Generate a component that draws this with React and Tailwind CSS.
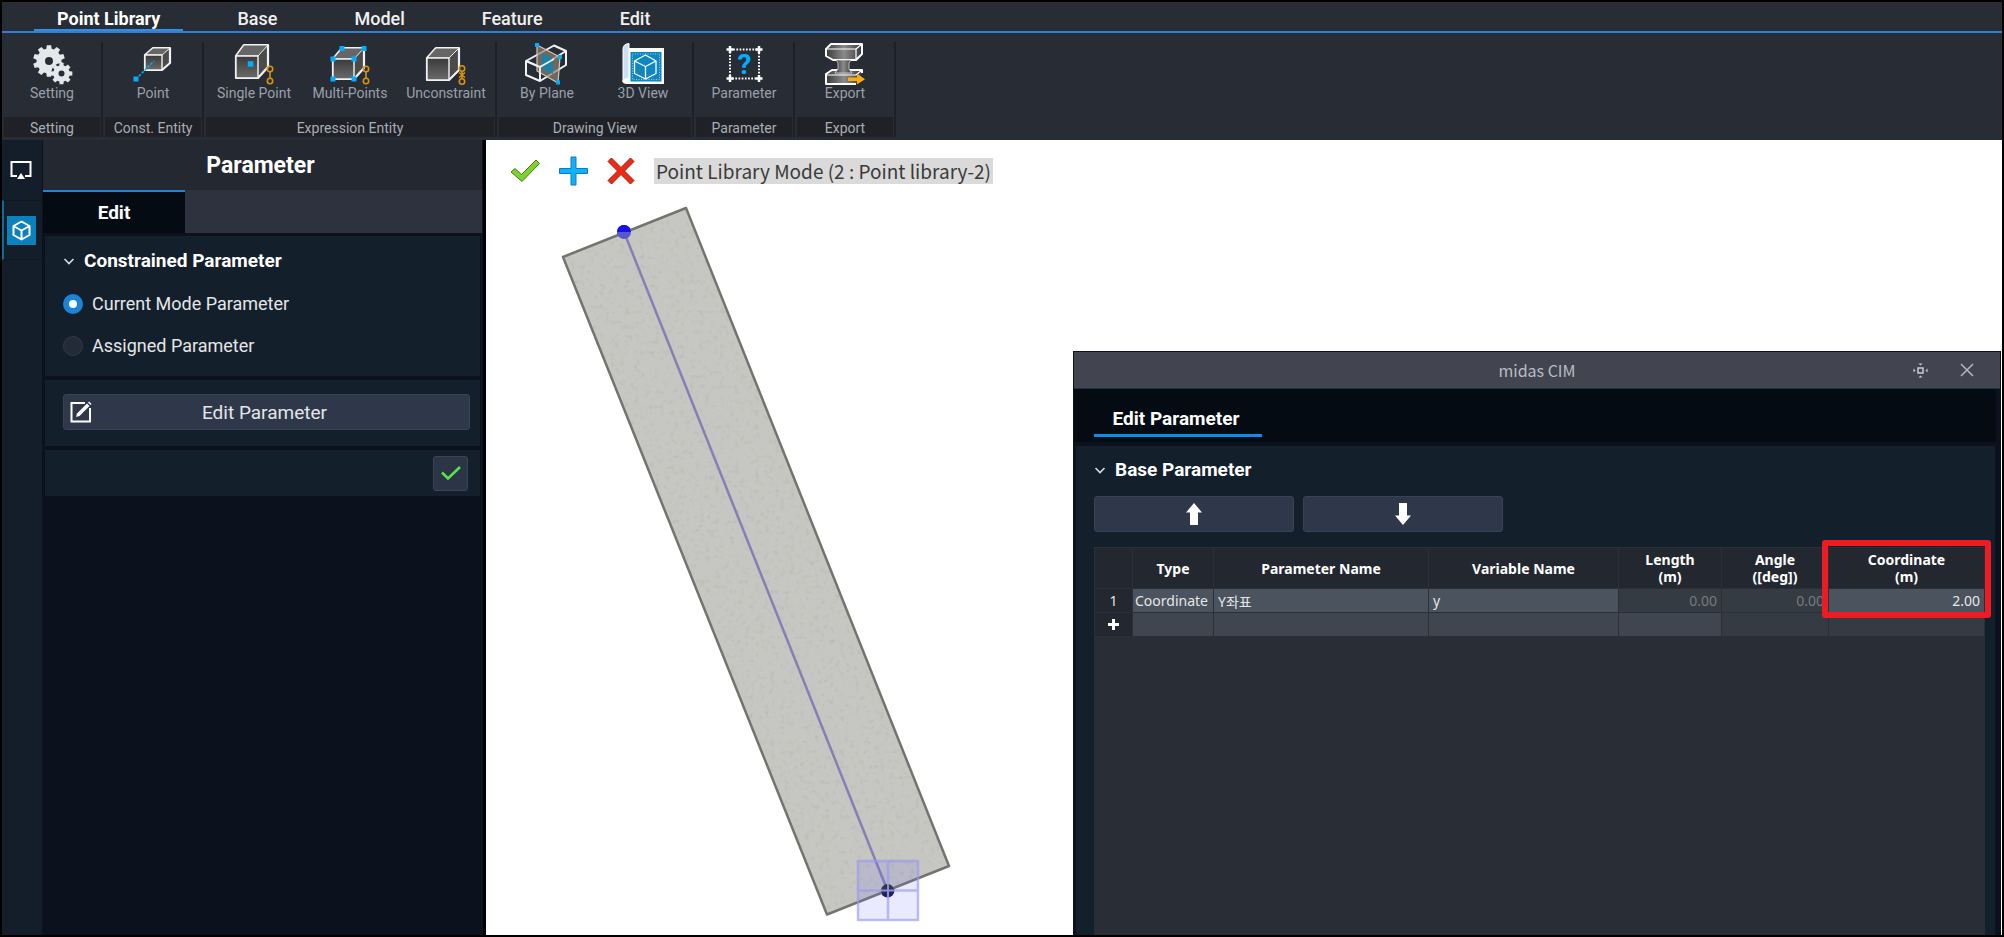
import { useState } from "react";

const tabs = ["Point Library", "Base", "Model", "Feature", "Edit"];

const gearPath = (cx, cy, outer, inner, teeth) => {
  const pts = [];
  const step = (Math.PI * 2) / teeth;
  for (let i = 0; i < teeth; i++) {
    const a = i * step - Math.PI / 2;
    [
      [-0.34, inner],
      [-0.22, outer],
      [0.22, outer],
      [0.34, inner],
    ].forEach(([o, r]) => {
      pts.push(
        `${(cx + r * Math.cos(a + o * step)).toFixed(2)},${(cy + r * Math.sin(a + o * step)).toFixed(2)}`
      );
    });
  }
  return `M${pts.join("L")}Z`;
};

const Icon = ({ children }) => (
  <svg
    width="40"
    height="43"
    viewBox="0 0 40 43"
    fill="none"
    className="overflow-visible"
    aria-hidden="true"
  >
    <defs>
      <linearGradient id="face" x1="0" y1="0" x2="0" y2="1">
        <stop offset="0" stopColor="#3a3a3a" />
        <stop offset="1" stopColor="#6a6a6a" />
      </linearGradient>
      <linearGradient id="metal" x1="0" y1="0" x2="1" y2="0">
        <stop offset="0" stopColor="#3a3a3a" />
        <stop offset="0.5" stopColor="#8a8a8a" />
        <stop offset="1" stopColor="#3a3a3a" />
      </linearGradient>
    </defs>
    {children}
  </svg>
);

// x1,y1,x2,y2: front face, tx,ty: back top left corner, rx: back right edge
const Cube = ({ x1, y1, x2, y2, tx, ty, rx }) => {
  const by = y2 - (y1 - ty);
  return (
    <g stroke="#f2f2f2" strokeLinejoin="round">
      <path
        d={`M${x1} ${y1}L${tx} ${ty}H${rx}V${by}L${x2} ${y2}H${x1}Z`}
        fill="#4b4b4b"
        strokeWidth="2.2"
      />
      <path d={`M${x1} ${y1}L${tx} ${ty}H${rx}L${x2} ${y1}Z`} fill="#666" />
      <path d={`M${x1} ${y1}H${x2}V${y2}H${x1}Z`} fill="url(#face)" strokeWidth="1.4" />
    </g>
  );
};

const Dots = ({ points, size = 5 }) =>
  points.map(([x, y]) => (
    <rect
      key={`${x}-${y}`}
      x={x - size / 2}
      y={y - size / 2}
      width={size}
      height={size}
      fill="#00aeff"
    />
  ));

const Link = () => (
  <g stroke="#d9930d" strokeWidth="1.6">
    <circle cx="36" cy="27" r="2.7" />
    <circle cx="36" cy="39" r="2.7" />
    <path d="M36 30v6" />
  </g>
);

const icons = {
  setting: (
    <>
      <path
        fillRule="evenodd"
        fill="#e3e9ea"
        d={`${gearPath(17, 19, 16, 12.5, 10)}M21 19a4 4 0 1 0-8 0a4 4 0 1 0 8 0Z`}
      />
      <circle cx="29.5" cy="31.5" r="10.5" fill="#282c35" />
      <path
        fillRule="evenodd"
        fill="#e3e9ea"
        d={`${gearPath(29.5, 31.5, 11, 8.3, 8)}M32.5 31.5a3 3 0 1 0-6 0a3 3 0 1 0 6 0Z`}
      />
    </>
  ),
  point: (
    <>
      <Cube x1={12} y1={13} x2={29} y2={28} tx={20} ty={6} rx={37} />
      <path d="M3 37L21 19" stroke="#00aeff" strokeWidth="1.6" strokeDasharray="2.5 1.6" />
      <Dots points={[[3, 37]]} />
    </>
  ),
  single: (
    <>
      <Cube x1={2} y1={14} x2={24} y2={36} tx={10} ty={3} rx={34} />
      <Dots points={[[16.5, 22]]} size={5.5} />
      <Link />
    </>
  ),
  multi: (
    <>
      <Cube x1={3} y1={17} x2={24} y2={37} tx={12} ty={6} rx={34} />
      <Dots points={[[3, 17], [24, 17], [3, 37], [24, 37], [12, 6.5], [34, 6.5]]} />
      <Link />
    </>
  ),
  unconstraint: (
    <>
      <Cube x1={1} y1={16} x2={23} y2={38} tx={10} ty={6} rx={33} />
      <g stroke="#d9930d" strokeWidth="1.6">
        <circle cx="36" cy="26.5" r="2.7" />
        <circle cx="36" cy="39.5" r="2.7" />
        <path d="M36 29v8M33 30.5l6 5M39 30.5l-6 5" />
      </g>
    </>
  ),
  plane: (
    <>
      <g stroke="#f2f2f2" strokeWidth="2" strokeLinejoin="round">
        <path d="M-1 19L27 3.500L39 9V23L13 39L-1 33Z" />
        <path d="M-1 19L13 25V39M13 25L39 9" />
      </g>
      <path
        d="M10 3L33 15L31 41L10 29Z"
        fill="#8f8170"
        fillOpacity="0.7"
        stroke="#cfc8c0"
        strokeWidth="1.2"
      />
      <path d="M15 11L26 17V32L15 27Z" fill="#1e7fa8" />
      <path d="M-1 19L13 25V39M13 25L27 17" stroke="#f2f2f2" strokeWidth="1.6" />
      <Dots points={[[10, 3], [33, 15], [31, 40.5]]} size={4} />
    </>
  ),
  view3d: (
    <>
      <path d="M3 6H41V42H3Z" fill="#fff" />
      <path d="M0 7Q0 2 6 1.500V37Q0 37 0 40Z" fill="#cfdff2" stroke="#fff" strokeWidth="1" />
      <path d="M6 36Q-1 36 -0.500 39.500Q0 42 4 42H8V36Z" fill="#fff" />
      <rect x="7.500" y="10" width="31" height="29.500" fill="#0f86bf" />
      <rect
        x="9.500"
        y="12"
        width="27"
        height="25.500"
        stroke="#8fd0f0"
        strokeDasharray="1 1.500"
      />
      <path
        d="M22.500 13L33 19V31.500L22.500 37L11.500 31.500V19ZM11.500 19L22.500 24.500L33 19M22.500 24.500V37"
        stroke="#fff"
        strokeWidth="1.3"
        strokeLinejoin="round"
      />
    </>
  ),
  parameter: (
    <>
      <rect x="6" y="7.500" width="29" height="29" stroke="#fff" strokeWidth="2" strokeDasharray="1.700 1.500" />
      <path
        d="M2.500 7.500h7M6 4v7M31.500 7.500h7M35 4v7M2.500 36.500h7M6 33v7M31.500 36.500h7M35 33v7"
        stroke="#fff"
        strokeWidth="2.500"
      />
      <text
        x="20.500"
        y="32"
        textAnchor="middle"
        fill="#00aeff"
        className="font-[Roboto] text-[28px] font-bold"
      >
        ?
      </text>
    </>
  ),
  export: (
    <>
      <g stroke="#fff" strokeWidth="2" strokeLinejoin="round">
        <path d="M1 7L6 2H37V12L31 18H8L1 14Z" fill="url(#metal)" />
        <path d="M1 7H31L37 2M31 7V18" strokeWidth="1.200" />
        <path d="M37 31V28H7L1 32V42H31" fill="url(#metal)" />
        <path d="M1 33H31L37 28" strokeWidth="1.200" />
      </g>
      <path d="M11 18H26L24 21V27L27 31H10L13 27V21Z" fill="url(#metal)" stroke="#ddd" strokeWidth="0.800" />
      <path d="M23 35.500H32V31.500L40 37.200L32 42.500V39H23Z" fill="#ffa90a" />
    </>
  ),
};

const groups = [
  { name: "Setting", items: [["Setting", "setting"]] },
  { name: "Const. Entity", items: [["Point", "point"]] },
  {
    name: "Expression Entity",
    items: [
      ["Single Point", "single"],
      ["Multi-Points", "multi"],
      ["Unconstraint", "unconstraint"],
    ],
  },
  {
    name: "Drawing View",
    items: [
      ["By Plane", "plane"],
      ["3D View", "view3d"],
    ],
  },
  { name: "Parameter", items: [["Parameter", "parameter"]] },
  { name: "Export", items: [["Export", "export"]] },
];

const Ribbon = () => {
  const [active, setActive] = useState("Point Library");
  return (
    <header className="bg-[#282c35] font-[Roboto,sans-serif]">
      <nav className="flex h-[31px] gap-[31px] border-b-2 border-[#2f7fd6] pl-8">
        {tabs.map((tab) => (
          <button
            key={tab}
            type="button"
            onClick={() => setActive(tab)}
            className={
              tab === active
                ? "border-b-2 border-[#2f8fe8] px-[23px] pt-[6px] text-lg leading-5 font-bold text-white"
                : "border-b-2 border-transparent px-[23px] pt-[6px] text-lg leading-5 font-medium text-[#f0f0f0]"
            }
          >
            {tab}
          </button>
        ))}
      </nav>
      <div className="flex h-[107px] pt-[9px] pb-[3px]">
        {groups.map((group) => (
          <div key={group.name} className="flex border-r-2 border-[#1d2027] pr-px pl-0.5">
            <div className="flex flex-col justify-between">
              <div className="flex">
                {group.items.map(([label, icon]) => (
                  <button
                    key={label}
                    type="button"
                    className="flex w-24 flex-col items-center text-[#9ba0aa]"
                  >
                    <Icon>{icons[icon]}</Icon>
                    <span className="text-sm leading-4 whitespace-nowrap">{label}</span>
                  </button>
                ))}
              </div>
              <div className="h-5 bg-[#1f2127] text-center text-sm leading-[22px] text-[#a9adb5]">
                {group.name}
              </div>
            </div>
          </div>
        ))}
      </div>
    </header>
  );
};

const Chevron = () => (
  <svg width="12" height="12" viewBox="0 0 12 12" fill="none" aria-hidden="true">
    <path d="M1.500 4L6 8.500L10.500 4" stroke="#d8dce0" strokeWidth="1.600" />
  </svg>
);

const SideRail = () => (
  <div className="flex w-10 shrink-0 flex-col bg-[#141e2a]">
    <button
      type="button"
      aria-label="Display"
      className="flex h-[60px] items-center justify-center pr-0.5"
    >
      <svg width="22" height="20" viewBox="0 0 22 20" fill="none" aria-hidden="true">
        <path d="M7 16H1.500V2H20.500V16H15" stroke="#fff" strokeWidth="2" />
        <path d="M11 13L15 19H7Z" fill="#fff" />
      </svg>
    </button>
    <button
      type="button"
      aria-label="Model"
      className="flex h-[60px] items-center justify-center border-y border-l-2 border-y-[#0f1720] border-l-[#0f6c94] pr-1"
    >
      <span className="flex size-[29px] items-center justify-center bg-[#0c82bd]">
        <svg width="21" height="21" viewBox="0 0 21 21" fill="none" aria-hidden="true">
          <path
            d="M10.500 1.500L18.500 6V15L10.500 19.500L2.500 15V6ZM2.500 6L10.500 10.500L18.500 6M10.500 10.500V19.500"
            stroke="#fff"
            strokeWidth="2"
            strokeLinejoin="round"
          />
        </svg>
      </span>
    </button>
  </div>
);

const ParameterPanel = () => {
  const [mode, setMode] = useState("current");
  const radio =
    "size-5 appearance-none rounded-full border border-[#323a49] bg-[#242b38] checked:border-[6px] checked:border-[#1b84d9] checked:bg-white";
  return (
    <aside className="flex w-[444px] shrink-0 flex-col border-r-[3px] border-black bg-[#0c121d] px-px font-[Roboto,sans-serif] text-[#e4e6e8]">
      <h1 className="h-[50px] bg-[#242831] pr-1 text-center text-[23px] leading-[52px] font-bold text-white">
        Parameter
      </h1>
      <div className="flex h-[43px] bg-[#2d323e]">
        <button
          type="button"
          className="w-[142px] border-t-2 border-[#1787dd] bg-[#050b12] pt-0.5 text-[19px] font-bold text-white"
        >
          Edit
        </button>
      </div>
      <div className="flex flex-col gap-1 px-0.5 pt-[3px]">
        <section className="h-[140px] bg-[#141f2c] px-[18px] pt-[13px]">
          <h2 className="flex items-center gap-[9px] text-[19px] leading-6 font-bold text-white">
            <Chevron />
            Constrained Parameter
          </h2>
          <label className="mt-[19px] flex items-center gap-[9px] text-lg leading-6">
            <input
              type="radio"
              name="mode"
              className={radio}
              checked={mode === "current"}
              onChange={() => setMode("current")}
            />
            Current Mode Parameter
          </label>
          <label className="mt-[18px] flex items-center gap-[9px] text-lg leading-6">
            <input
              type="radio"
              name="mode"
              className={radio}
              checked={mode === "assigned"}
              onChange={() => setMode("assigned")}
            />
            Assigned Parameter
          </label>
        </section>
        <section className="h-[66px] bg-[#141f2c] pt-[14px] pr-[10px] pl-[18px]">
          <button
            type="button"
            className="relative h-9 w-full rounded-[3px] border border-[#384356] bg-[#2e384a] pt-0.5 pr-1 text-[19px] leading-6"
          >
            <svg
              className="absolute top-[6px] left-[6px]"
              width="22"
              height="22"
              viewBox="0 0 22 22"
              fill="none"
              aria-hidden="true"
            >
              <path d="M15 2H1.500V20.500H20V7" stroke="#fff" strokeWidth="2" />
              <path d="M6 16L7 12.500L17 2.500L19.500 5L9.500 15Z" fill="#fff" />
              <path d="M18 1.500L19 0.500L21.500 3L20.500 4Z" fill="#fff" />
            </svg>
            Edit Parameter
          </button>
        </section>
        <section className="flex h-[46px] items-center justify-end bg-[#141f2c] pr-3">
          <button
            type="button"
            aria-label="Apply"
            className="flex size-[35px] items-center justify-center rounded-[3px] border border-[#3a4456] bg-[#2b3546]"
          >
            <svg width="22" height="18" viewBox="0 0 22 18" fill="none" aria-hidden="true">
              <path d="M2 8.500L8 14.500L20 3" stroke="#5fe04a" strokeWidth="2.600" />
            </svg>
          </button>
        </section>
      </div>
    </aside>
  );
};

const Viewport = () => (
  <>
    <div className="flex h-[62px] items-center gap-[19px] pl-6">
      <button type="button" aria-label="OK">
        <svg width="30" height="26" viewBox="0 0 30 26" aria-hidden="true">
          <path
            d="M1 14L5 10.500L11.500 16.500L26 2L29.500 5.500L12 23.500Z"
            fill="#7ed32a"
            stroke="#4b7a22"
            strokeLinejoin="round"
          />
        </svg>
      </button>
      <button type="button" aria-label="Add">
        <svg width="29" height="30" viewBox="0 0 29 30" aria-hidden="true">
          <path
            d="M12 1H17V12.500H28.500V17.500H17V29H12V17.500H0.500V12.500H12Z"
            fill="#0db2ff"
            stroke="#1478b8"
            strokeLinejoin="round"
          />
        </svg>
      </button>
      <button type="button" aria-label="Cancel">
        <svg width="28" height="28" viewBox="0 0 28 28" aria-hidden="true">
          <path
            d="M1 4.500L4.500 1L14 10.500L23.500 1L27 4.500L17.500 14L27 23.500L23.500 27L14 17.500L4.500 27L1 23.500L10.500 14Z"
            fill="#ee2a12"
            stroke="#9c1d10"
            strokeLinejoin="round"
          />
        </svg>
      </button>
      <p className="bg-[#dadada] px-0.5 font-['Noto_Sans_CJK_KR',sans-serif] text-[19px] leading-[26px] text-[#3a3a3a]">
        Point Library Mode (2 : Point library-2)
      </p>
    </div>
    <svg
      width="400"
      height="733"
      viewBox="555 202 400 733"
      fill="none"
      className="ml-[69px] overflow-visible"
      role="img"
      aria-label="Inclined member"
    >
      <defs>
        <filter id="concrete" x="0" y="0" width="100%" height="100%">
          <feTurbulence type="fractalNoise" baseFrequency="0.2" numOctaves="3" seed="4" />
          <feColorMatrix values="0 0 0 0 0.4  0 0 0 0 0.38  0 0 0 0 0.34  1.1 0 0 0 -0.6" />
          <feComposite in2="SourceGraphic" operator="in" result="grain" />
          <feMerge>
            <feMergeNode in="SourceGraphic" />
            <feMergeNode in="grain" />
          </feMerge>
        </filter>
      </defs>
      <circle cx="624" cy="232" r="7" fill="#1212f0" />
      <circle cx="887.500" cy="890.500" r="7" fill="#1212d0" />
      <path d="M686 208L563 257L827 914.500L949 866Z" fill="#c4c4c0" fillOpacity="0.96" filter="url(#concrete)" />
      <path
        d="M686 208L563 257L827 914.500L949 866Z"
        stroke="#74746f"
        strokeWidth="2.500"
        strokeLinejoin="round"
      />
      <path d="M624 232L887.500 890.500" stroke="#8480b4" strokeWidth="2.500" />
      <path d="M617 232A7 7 0 0 1 631 232" fill="#1212f0" />
      <path d="M617 232A7 7 0 0 0 631 232" fill="#5a58c8" />
      <rect x="858" y="861" width="60" height="59" fill="#6a6aff" fillOpacity="0.14" />
      <path
        d="M858 861H918V920H858ZM888 861V920M858 890.500H918"
        stroke="#9a9af0"
        strokeOpacity="0.65"
        strokeWidth="2.500"
      />
      <circle cx="887.500" cy="890.500" r="6.500" fill="#22223c" fillOpacity="0.85" />
      <path d="M881 890.500H894M888 884V897" stroke="#8f8fd8" strokeWidth="2" />
    </svg>
  </>
);

const columns = [
  { label: "", width: "w-[38px]" },
  { label: "Type", width: "w-[81px]" },
  { label: "Parameter Name", width: "w-[215px]" },
  { label: "Variable Name", width: "w-[190px]" },
  { label: "Length", unit: "(m)", width: "w-[103px]" },
  { label: "Angle", unit: "([deg])", width: "w-[107px]" },
  { label: "Coordinate", unit: "(m)", width: "" },
];

const ParameterTable = () => {
  const [row, setRow] = useState({ name: "Y좌표", variable: "y", coordinate: "2.00" });

  const handleChange = (e) => {
    setRow({ ...row, [e.target.name]: e.target.value });
  };

  const cell = "h-6 border border-[#2a2f38] p-0";
  const input = "block h-[23px] w-full bg-transparent px-1 text-sm focus:outline-none";

  return (
    <div className="relative mt-[15px] flex-1 bg-[#282d36] font-['Noto_Sans','Noto_Sans_CJK_KR',sans-serif] text-sm text-[#e6e6e6]">
      <table className="w-full table-fixed border-collapse">
        <thead>
          <tr className="h-[41px] bg-[#232730] text-white">
            {columns.map((col) => (
              <th
                key={col.label}
                className={`${col.width} border border-[#2a2f38] p-0 leading-[17px] font-bold`}
              >
                {col.label}
                {col.unit && <span className="block">{col.unit}</span>}
              </th>
            ))}
          </tr>
        </thead>
        <tbody className="leading-[22px]">
          <tr>
            <td className={`${cell} bg-[#232730] text-center`}>1</td>
            <td className={`${cell} bg-[#4b535e] pl-0.5`}>Coordinate</td>
            <td className={`${cell} bg-[#4b535e]`}>
              <input
                aria-label="Parameter Name"
                name="name"
                value={row.name}
                onChange={handleChange}
                className={input}
              />
            </td>
            <td className={`${cell} bg-[#4b535e]`}>
              <input
                aria-label="Variable Name"
                name="variable"
                value={row.variable}
                onChange={handleChange}
                className={input}
              />
            </td>
            <td className={`${cell} bg-[#353b42] pr-1 text-right text-[#767a80]`}>0.00</td>
            <td className={`${cell} bg-[#353b42] pr-1 text-right text-[#767a80]`}>0.00</td>
            <td className={`${cell} bg-[#4b535e]`}>
              <input
                aria-label="Coordinate"
                name="coordinate"
                value={row.coordinate}
                onChange={handleChange}
                className={`${input} text-right`}
              />
            </td>
          </tr>
          <tr>
            <td className={`${cell} bg-[#232730]`}>
              <button type="button" aria-label="Add row" className="flex h-[22px] w-full items-center justify-center">
                <svg width="11" height="11" viewBox="0 0 11 11" aria-hidden="true">
                  <path d="M5.500 0V11M0 5.500H11" stroke="#fff" strokeWidth="3" />
                </svg>
              </button>
            </td>
            <td className={`${cell} bg-[#40464f]`} />
            <td className={`${cell} bg-[#40464f]`} />
            <td className={`${cell} bg-[#40464f]`} />
            <td className={`${cell} bg-[#40464f]`} />
            <td className={`${cell} bg-[#353b42]`} />
            <td className={`${cell} bg-[#353b42]`} />
          </tr>
        </tbody>
      </table>
      <div className="pointer-events-none absolute -top-[7px] -right-[6px] h-[78px] w-[169px] rounded-[3px] border-[6px] border-[#ed1c24]" />
    </div>
  );
};

const ParameterDialog = () => {
  const arrow =
    "flex h-9 w-[200px] items-center justify-center rounded-[3px] border border-[#384356] bg-[#2e384a]";
  return (
    <div
      role="dialog"
      aria-labelledby="dialog-title"
      className="absolute top-[211px] right-px bottom-0 flex w-[928px] flex-col border border-b-0 border-[#0c111b] bg-[#0c121d] font-[Roboto,sans-serif] text-white"
    >
      <div className="relative flex h-[37px] shrink-0 items-center justify-center border-b border-[#1d3340] bg-[#42454f]">
        <h2
          id="dialog-title"
          className="font-['Noto_Sans_CJK_KR',sans-serif] text-base text-[#b9bdc4]"
        >
          midas CIM
        </h2>
        <div className="absolute inset-y-0 right-[26px] flex items-center gap-8">
          <button type="button" aria-label="Dock">
            <svg width="15" height="15" viewBox="0 0 15 15" fill="none" aria-hidden="true">
              <rect x="5" y="5" width="5" height="5" stroke="#c8ccd2" strokeWidth="1.500" />
              <path
                d="M5.500 0.500H9.500L7.500 2.500ZM5.500 14.500H9.500L7.500 12.500ZM0.500 5.500V9.500L2.500 7.500ZM14.500 5.500V9.500L12.500 7.500Z"
                fill="#c8ccd2"
              />
            </svg>
          </button>
          <button type="button" aria-label="Close">
            <svg width="14" height="14" viewBox="0 0 14 14" aria-hidden="true">
              <path d="M1 1L13 13M13 1L1 13" stroke="#b4b8be" strokeWidth="1.500" />
            </svg>
          </button>
        </div>
      </div>
      <div className="mr-1 h-[53px] shrink-0 bg-[#050b12] pl-5">
        <button
          type="button"
          className="mt-3 h-9 w-[168px] border-b-[3px] border-[#0b8cf0] pt-1 pr-1 text-[19px] font-bold"
        >
          Edit Parameter
        </button>
      </div>
      <div className="mt-1 mr-[5px] ml-0.5 flex flex-1 flex-col bg-[#141f2c] pr-[10px] pl-[18px]">
        <h3 className="mt-3 flex items-center gap-[9px] text-[19px] leading-6 font-bold">
          <Chevron />
          Base Parameter
        </h3>
        <div className="mt-[14px] flex gap-[9px]">
          <button type="button" aria-label="Move up" className={arrow}>
            <svg width="16" height="22" viewBox="0 0 16 22" aria-hidden="true">
              <path d="M8 0L16 9.500H12V22H4V9.500H0Z" fill="#fff" />
            </svg>
          </button>
          <button type="button" aria-label="Move down" className={arrow}>
            <svg width="16" height="22" viewBox="0 0 16 22" aria-hidden="true">
              <path d="M8 22L16 12.500H12V0H4V12.500H0Z" fill="#fff" />
            </svg>
          </button>
        </div>
        <ParameterTable />
      </div>
    </div>
  );
};

export default function App() {
  return (
    <div className="flex h-screen flex-col overflow-hidden border-2 border-black bg-[#282c35]">
      <Ribbon />
      <div className="flex min-h-0 flex-1">
        <SideRail />
        <ParameterPanel />
        <main className="relative min-w-0 flex-1 overflow-hidden bg-white">
          <Viewport />
          <ParameterDialog />
        </main>
      </div>
    </div>
  );
}
